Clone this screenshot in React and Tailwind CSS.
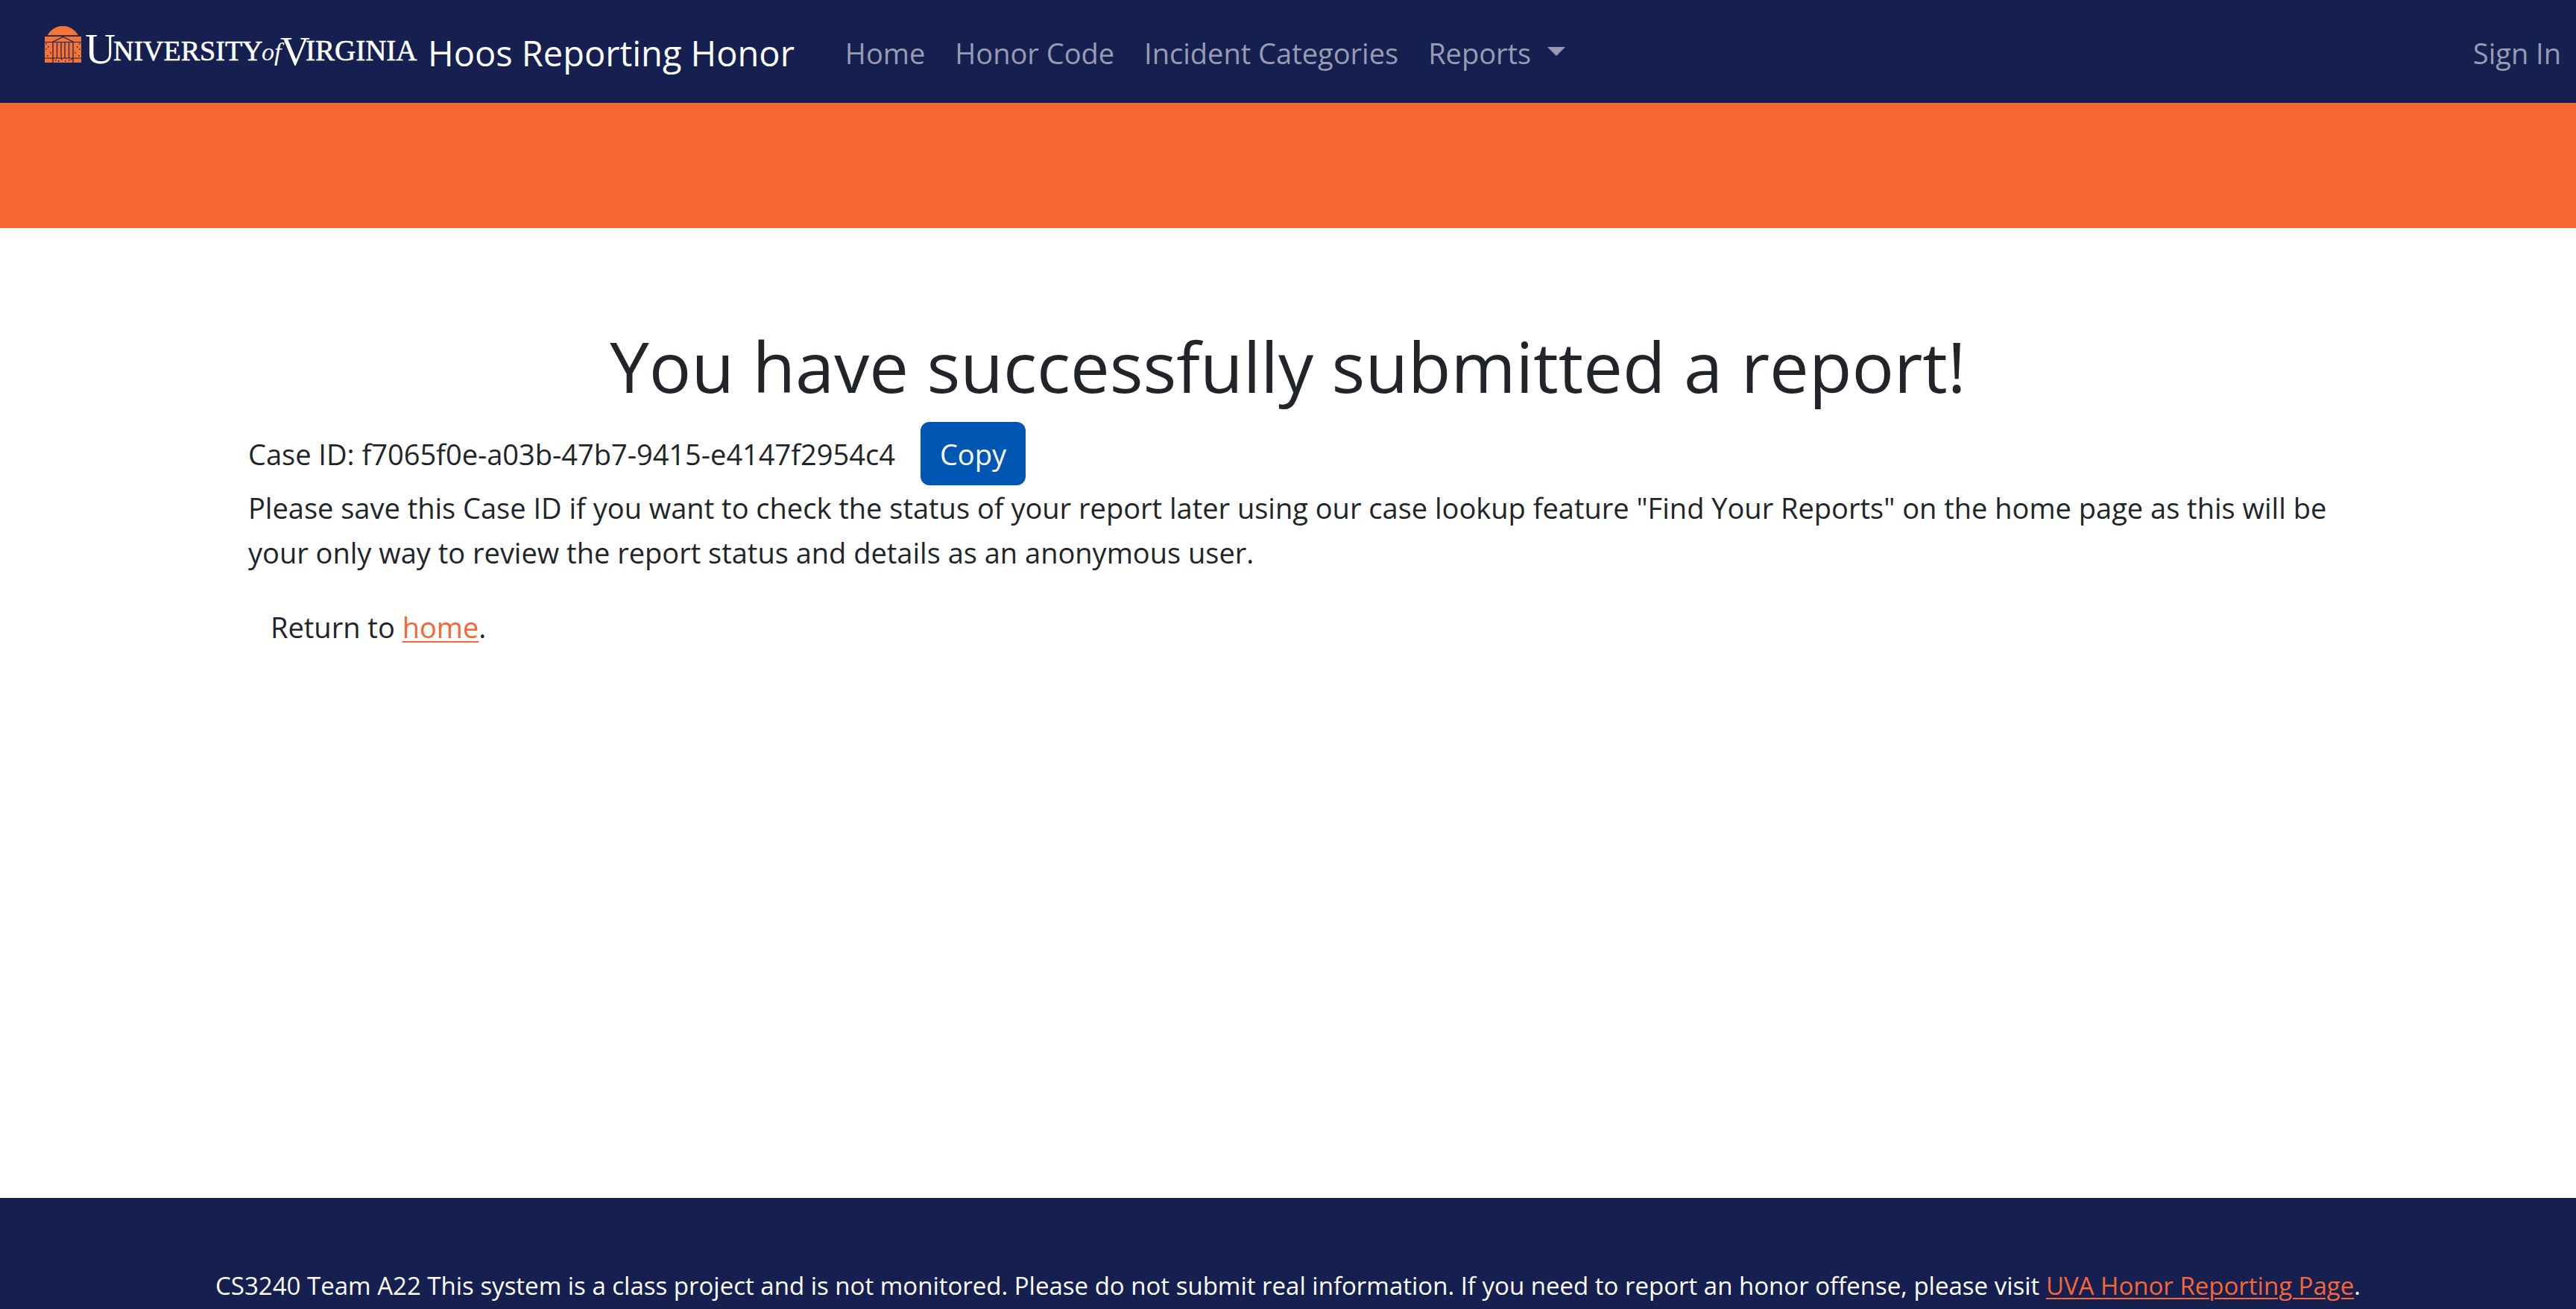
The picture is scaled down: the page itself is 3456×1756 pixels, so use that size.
const columnGaps = [16.5, 22, 27, 32.5];
const specks = [
  [1, 24], [4, 28], [1, 31], [7, 36], [3, 40], [46, 24], [43, 28], [46, 31], [40, 36], [45, 40],
  [14, 46], [18, 47], [22, 45], [27, 47], [32, 46], [35, 45],
];

function Logo() {
  return (
    <svg
      className="mb-1 h-[68px] w-[504px] shrink-0"
      viewBox="0 0 504 68"
      role="img"
      aria-label="University of Virginia"
    >
      <g fill="#f47435">
        <path d="M3.500 12.300 A23.500 23.500 0 0 1 45 12.300 Z" />
        <rect x="0" y="14" width="49" height="35" />
      </g>
      <g fill="none" stroke="#151f50" strokeWidth="1.200">
        <path d="M0 21.500 H12 M37 21.500 H49 M0 43 H49" />
        <path d="M10 21.500 L24.500 14.500 L39 21.500 Z" />
        <path d="M11 22 V49 M38 22 V49" />
        {columnGaps.map((x) => (
          <path key={x} d={`M${x} 22 V43`} />
        ))}
      </g>
      <g fill="#151f50">
        {specks.map(([x, y]) => (
          <rect key={`${x}-${y}`} x={x} y={y - 1} width="1.500" height="1.500" />
        ))}
      </g>
      <g fill="#ffffff" className="font-['Liberation_Serif',serif]">
        <text x="54" y="50" fontSize="57">U</text>
        <text x="92" y="46" fontSize="38" stroke="#ffffff" strokeWidth="0.600">NIVERSITY</text>
        <text x="291" y="46" fontSize="34" fontStyle="italic">of</text>
        <text x="316" y="52" fontSize="55">V</text>
        <text x="350" y="46" fontSize="39" stroke="#ffffff" strokeWidth="0.600">IRGINIA</text>
      </g>
    </svg>
  );
}

const navLinks = ["Home", "Honor Code", "Incident Categories"];

export default function App() {
  return (
    <div className="flex min-h-screen flex-col bg-white font-['Open_Sans',sans-serif] text-[38px] leading-[60px] text-[#212529]">
      <header className="bg-[#151f50]">
        <nav className="flex h-[138px] items-center pt-1 pr-5 pl-[60px]">
          <a href="#" className="flex items-center gap-2.5 text-[47px] leading-[70px] text-white">
            <Logo />
            <span>Hoos Reporting Honor</span>
          </a>
          <ul className="ml-[68px] flex items-center gap-10 text-[#989bb1]">
            {navLinks.map((label) => (
              <li key={label}>
                <a href="#">{label}</a>
              </li>
            ))}
            <li>
              <button type="button" aria-haspopup="menu" className="flex items-center gap-[22px]">
                Reports
                <svg className="mb-1 h-3 w-6" viewBox="0 0 24 12" fill="currentColor" aria-hidden="true">
                  <path d="M0 0 H24 L12 12 Z" />
                </svg>
              </button>
            </li>
          </ul>
          <a href="#" className="ml-auto text-[#989bb1]">Sign In</a>
        </nav>
      </header>
      <div className="h-[168px] bg-[#f96635]" />

      <main className="mx-auto w-full max-w-[2790px] flex-1 pt-[125px]">
        <h1 className="text-center text-[94px] leading-[120px]">
          You have successfully submitted a report!
        </h1>
        <div className="mt-[15px] flex items-center gap-[34px]">
          <span>
            Case ID: <span>f7065f0e-a03b-47b7-9415-e4147f2954c4</span>
          </span>
          <button
            type="button"
            className="h-[85px] rounded-xl bg-[#0056b3] px-[26px] text-white"
          >
            Copy
          </button>
        </div>
        <p>
          Please save this Case ID if you want to check the status of your report later using our
          case lookup feature "Find Your Reports" on the home page as this will be your only way to
          review the report status and details as an anonymous user.
        </p>
        <p className="mt-10 px-[30px]">
          Return to{" "}
          <a href="#" className="text-[#f96635] underline decoration-2 underline-offset-4">home</a>.
        </p>
      </main>

      <footer className="bg-[#151f50] px-10 pt-[92px] pb-[5px] text-center text-[33px] leading-[52px] text-white">
        CS3240 Team A22 This system is a class project and is not monitored. Please do not submit
        real information. If you need to report an honor offense, please visit{" "}
        <a href="#" className="text-[#f96635] underline decoration-2 underline-offset-4">
          UVA Honor Reporting Page
        </a>
        .
      </footer>
    </div>
  );
}
